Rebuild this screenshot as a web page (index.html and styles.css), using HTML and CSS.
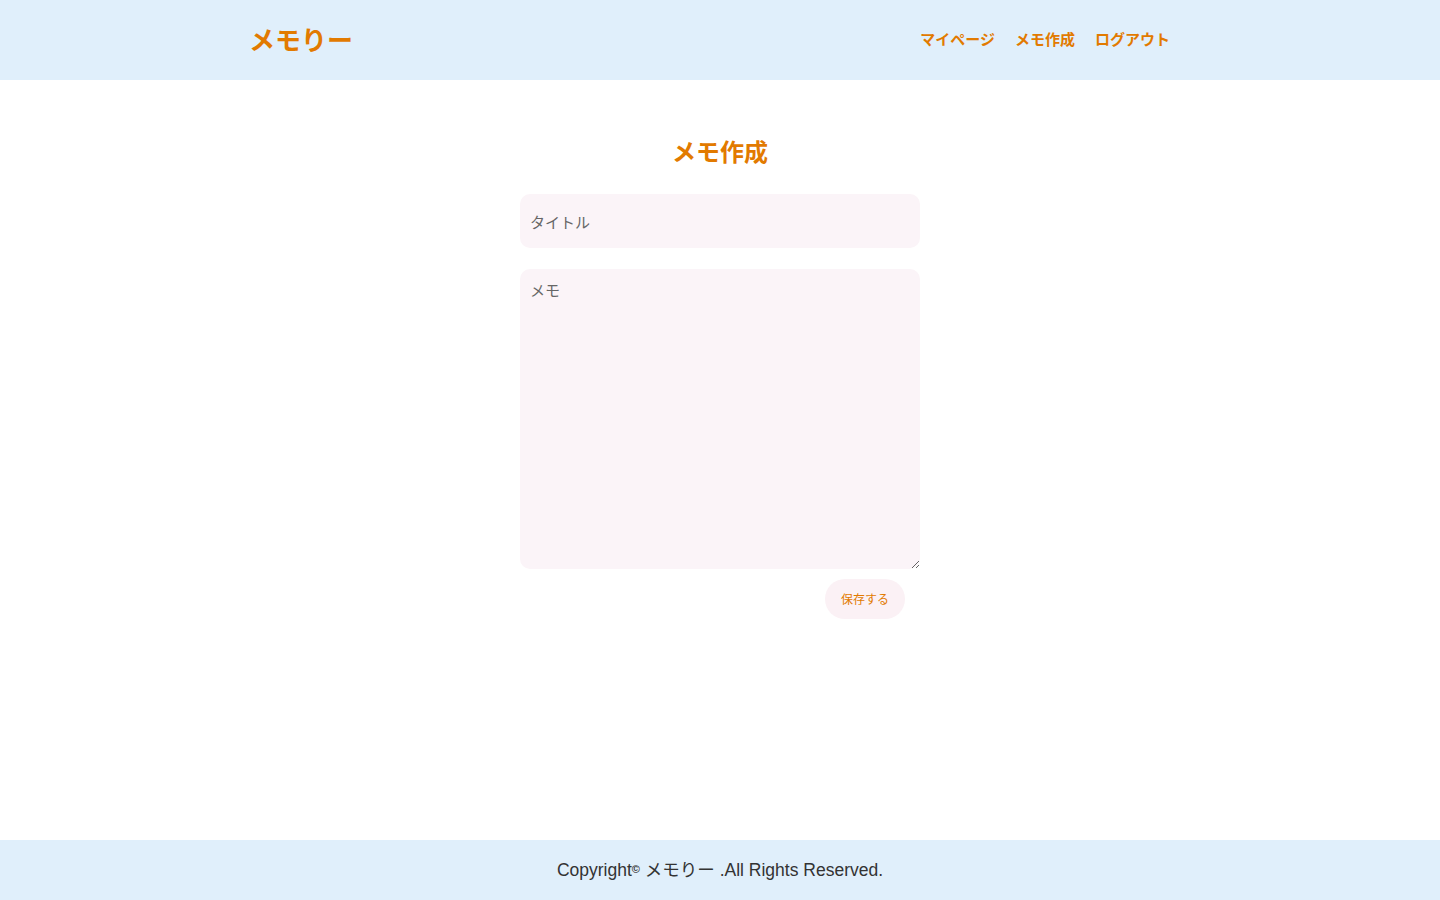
FILE: index.html
```html
<!DOCTYPE html>
<html lang="ja">
<head>
<meta charset="utf-8">
<title>メモ作成 | メモりー</title>
<link rel="stylesheet" href="styles.css">
</head>
<body>
<header class="header">
  <div class="header-inner">
    <a class="logo" href="#">メモりー</a>
    <nav class="nav">
      <a href="#">マイページ</a>
      <a href="#">メモ作成</a>
      <a href="#">ログアウト</a>
    </nav>
  </div>
</header>
<main class="main">
  <h1 class="page-title">メモ作成</h1>
  <form class="memo-form">
    <input class="field" type="text" placeholder="タイトル">
    <textarea class="field field-area" placeholder="メモ"></textarea>
    <div class="actions">
      <button type="button" class="btn">保存する</button>
    </div>
  </form>
</main>
<footer class="footer">
  <p>Copyright<span class="copy">©</span> メモりー .All Rights Reserved.</p>
</footer>
</body>
</html>
```
FILE: styles.css
```css
* { box-sizing: border-box; }
html, body { margin: 0; padding: 0; }
body {
  font-family: "Noto Sans CJK JP", "Noto Sans", sans-serif;
  min-height: 100vh;
  display: flex;
  flex-direction: column;
  background: #fff;
  color: #333;
}
.header {
  background: #e0effb;
  height: 80px;
}
.header-inner {
  width: 940px;
  margin: 0 auto;
  height: 100%;
  display: flex;
  align-items: center;
  justify-content: space-between;
  padding-right: 20px;
  padding-bottom: 4px;
}
.logo {
  color: #e27a00;
  font-weight: 700;
  font-size: 26px;
  text-decoration: none;
  margin-left: -1px;
}
.nav {
  display: flex;
  gap: 20px;
}
.nav a {
  color: #e27a00;
  font-weight: 700;
  font-size: 15px;
  text-decoration: none;
}
.main {
  flex: 1;
  display: flex;
  flex-direction: column;
  align-items: center;
  padding-top: 53px;
}
.page-title {
  margin: 0 0 25px;
  color: #e27a00;
  font-size: 24px;
  font-weight: 700;
  line-height: 36px;
}
.memo-form {
  width: 400px;
  display: flex;
  flex-direction: column;
}
.field {
  display: block;
  width: 100%;
  height: 54px;
  border: none;
  border-radius: 10px;
  background: #fbf4f8;
  padding: 0 10px;
  font-family: inherit;
  font-size: 15px;
  color: #555;
  outline: none;
}
.field::placeholder { color: #666; }
.field-area {
  margin-top: 21px;
  height: 300px;
  padding: 10px;
  resize: vertical;
  line-height: 22px;
}
.actions {
  display: flex;
  justify-content: flex-end;
  padding-right: 15px;
  margin-top: 10px;
}
.btn {
  width: 80px;
  height: 40px;
  border: none;
  border-radius: 20px;
  background: #fbf1f5;
  color: #e27a00;
  font-family: inherit;
  font-size: 12px;
  padding-bottom: 2px;
  cursor: pointer;
}
.footer {
  background: #e0effb;
  height: 60px;
  display: flex;
  align-items: center;
  justify-content: center;
  padding-bottom: 4px;
}
.footer p {
  margin: 0;
  font-family: "Liberation Sans", "Noto Sans CJK JP", sans-serif;
  font-size: 17.5px;
  color: #333;
}
.copy { font-size: 11px; font-weight: 700; vertical-align: 3px; }
```
